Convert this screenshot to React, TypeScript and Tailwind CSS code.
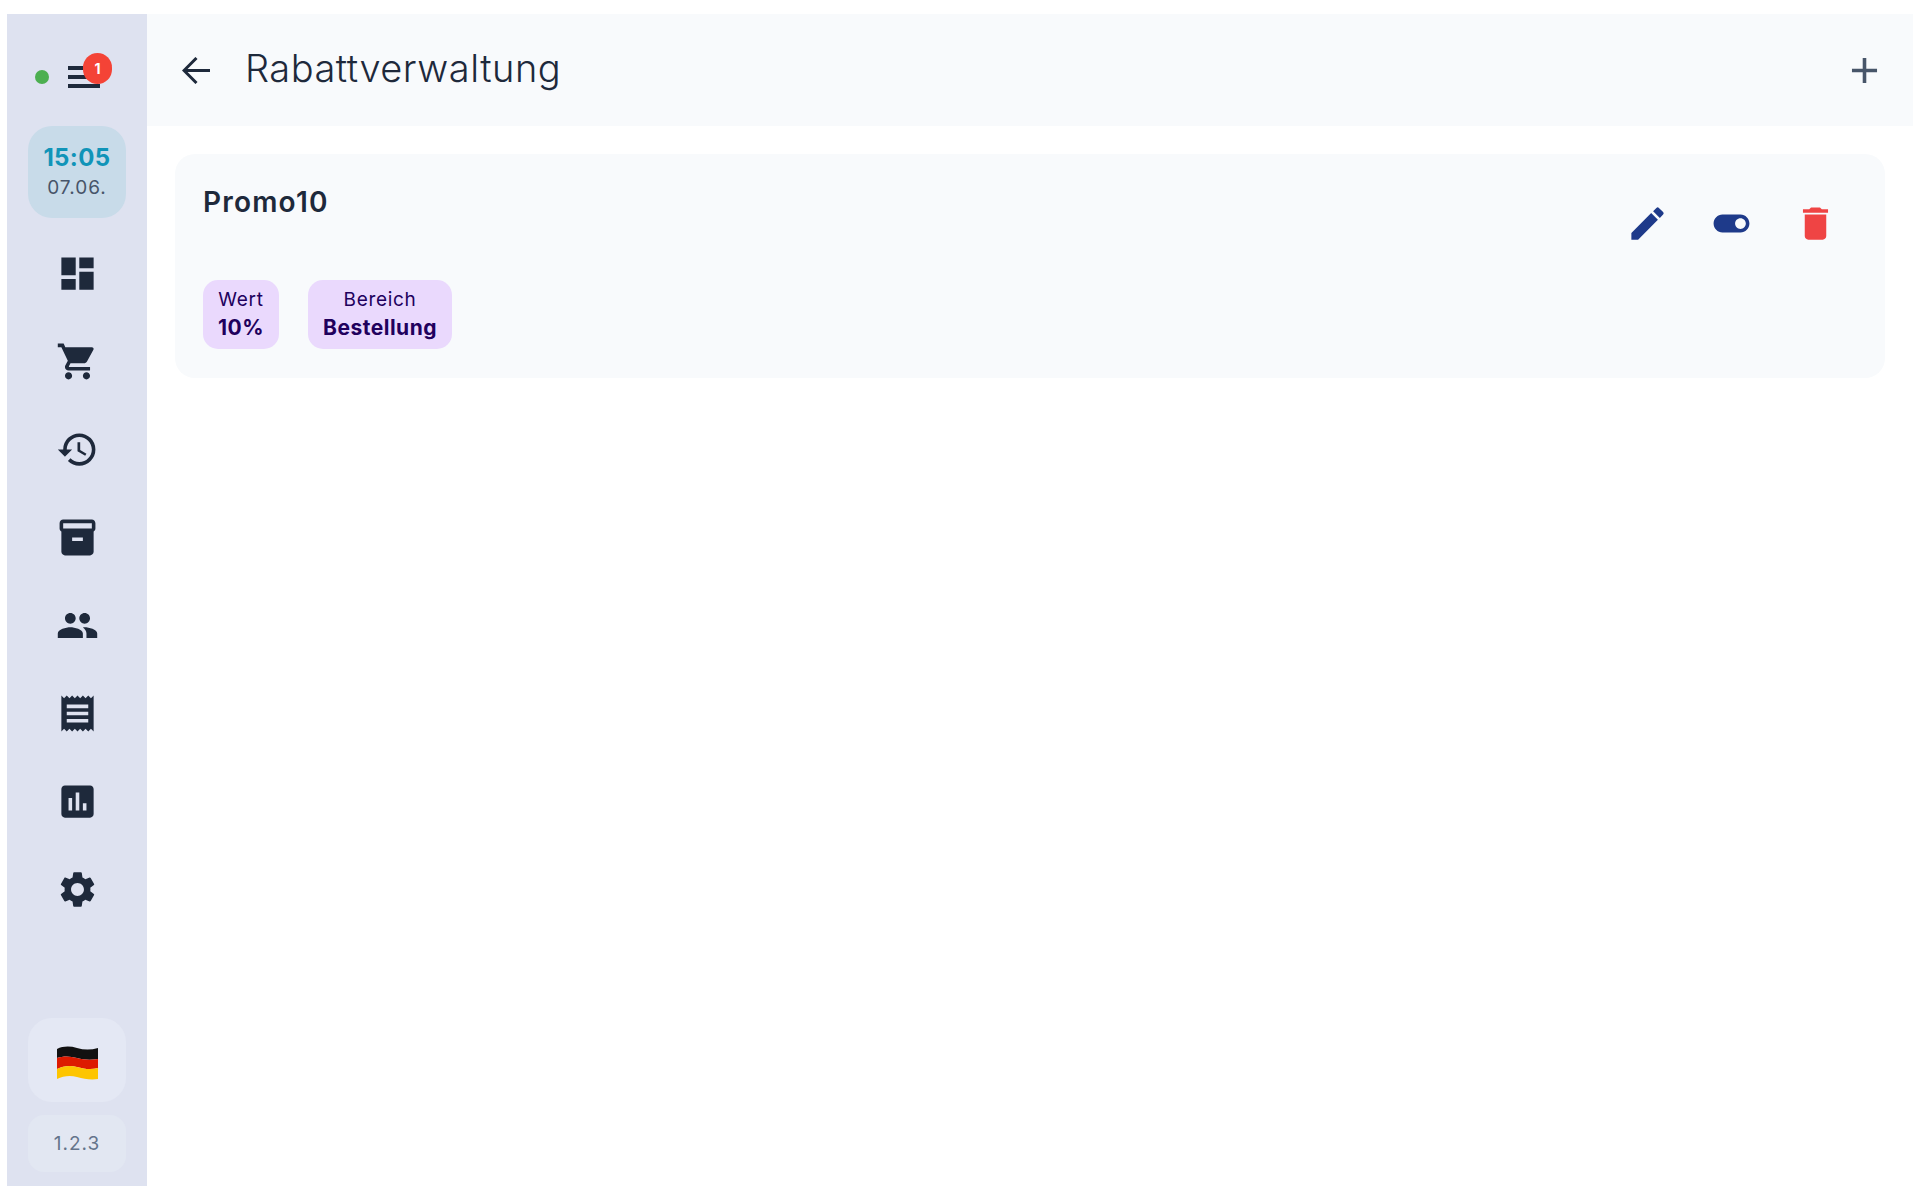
import {
  MdAdd,
  MdAssessment,
  MdDashboard,
  MdDelete,
  MdEdit,
  MdHistory,
  MdInventory2,
  MdPeople,
  MdReceipt,
  MdSettings,
  MdShoppingCart,
  MdToggleOn,
} from "react-icons/md";

const navItems = [
  MdDashboard,
  MdShoppingCart,
  MdHistory,
  MdInventory2,
  MdPeople,
  MdReceipt,
  MdAssessment,
  MdSettings,
];

const GermanFlag = () => (
  <svg viewBox="0 0 41 34" className="mt-[6px] h-[34px] w-[41px]">
    <path d="M0 3C6 0 13 0 20 2C27 4 34 4 41 2V13C34 14 27 14 20 12C13 10 6 10 0 12Z" fill="#111111" />
    <path d="M0 12C6 10 13 10 20 12C27 14 34 14 41 13V22C34 24 27 23 20 21C13 19 6 20 0 23Z" fill="#dd1a00" />
    <path d="M0 23C6 20 13 19 20 21C27 23 34 24 41 22V33C34 34 27 33 20 31C13 29 6 30 0 33Z" fill="#fdc500" />
  </svg>
);

const Chip = ({ label, value }: { label: string; value: string }) => (
  <div className="flex h-[69px] min-w-[76px] flex-col items-center rounded-[15px] bg-[#ead9fd] px-[15px] pt-[6px] text-[#21005d]">
    <span className="text-[19px] leading-[28px] tracking-[0.7px]">{label}</span>
    <span className="text-[21px] leading-[28px] font-bold tracking-[0.5px]">{value}</span>
  </div>
);

export default function App() {
  return (
    <div className="h-[1200px] bg-white pt-[14px] pr-[7px] pb-[14px] pl-[7px] font-['Inter',sans-serif] text-[#1e293b]">
      <div className="flex h-full">
        {/* Sidebar */}
        <aside className="flex w-[140px] shrink-0 flex-col items-center bg-[#dee2f0]">
          <div className="mt-[43px] flex h-[40px] items-center gap-[19px] pr-[19px]">
            <span className="h-[14px] w-[14px] rounded-full bg-[#4caf50]" />
            <div className="relative flex h-[22px] w-[32px] flex-col justify-between">
              <span className="h-[4px] bg-[#1e293b]" />
              <span className="h-[4px] bg-[#1e293b]" />
              <span className="h-[4px] bg-[#1e293b]" />
              <span className="absolute -top-[13px] left-[15px] flex h-[31px] w-[29px] items-center justify-center rounded-full bg-[#f44336] text-[14px] font-bold text-white">
                1
              </span>
            </div>
          </div>

          <div className="mt-[29px] flex h-[92px] w-[98px] flex-col items-center justify-center rounded-[24px] bg-[#c8dbe9] pt-[2px]">
            <span className="text-[24px] leading-[30px] font-bold tracking-[0.4px] text-[#1094b8]">15:05</span>
            <span className="text-[19px] leading-[30px] tracking-[1px] text-[#475569]">07.06.</span>
          </div>

          <nav className="mt-[11px] flex flex-col">
            {navItems.map((Icon, i) => (
              <div key={i} className="flex h-[88px] w-[98px] items-center justify-center">
                <Icon className="h-[43px] w-[43px] text-[#1e293b]" />
              </div>
            ))}
          </nav>

          <div className="mt-auto flex h-[84px] w-[98px] items-center justify-center rounded-[24px] bg-[#e4e8f4]">
            <GermanFlag />
          </div>
          <div className="mt-[13px] mb-[14px] flex h-[57px] w-[98px] items-center justify-center rounded-[16px] bg-[#e2e7f2] pt-[2px] text-[19px] tracking-[1px] text-[#64748b]">
            1.2.3
          </div>
        </aside>

        {/* Main */}
        <main className="flex min-w-0 flex-1 flex-col">
          <header className="flex h-[112px] items-center justify-between bg-[#f8fafc] pr-[27px] pl-[35px]">
            <div className="flex items-center gap-[35px]">
              <svg viewBox="0 0 28 27" className="h-[27px] w-[28px]" fill="none" stroke="#1e293b" strokeWidth="3">
                <path d="M28 13.5H2.5M14.5 1L2 13.5L14.5 26" />
              </svg>
              <h1 className="-mt-[5px] text-[38px] leading-none font-light tracking-[0.5px] text-[#1e293b]">
                Rabattverwaltung
              </h1>
            </div>
            <MdAdd className="h-[43px] w-[43px] text-[#475569]" />
          </header>

          <section className="p-[28px]">
            <div className="flex h-[224px] justify-between rounded-[20px] bg-[#f8fafc] pt-[28px] pr-[48px] pb-[29px] pl-[28px]">
              <div className="flex flex-col justify-between">
                <h2 className="mt-[2px] text-[28px] leading-[36px] font-semibold tracking-[1.2px]">Promo10</h2>
                <div className="flex gap-[29px]">
                  <Chip label="Wert" value="10%" />
                  <Chip label="Bereich" value="Bestellung" />
                </div>
              </div>
              <div className="flex items-start gap-[41px] pt-[20px]">
                <MdEdit className="h-[43px] w-[43px] text-[#1e3a8a]" />
                <MdToggleOn className="h-[43px] w-[43px] text-[#1e3a8a]" />
                <MdDelete className="h-[43px] w-[43px] text-[#ef4444]" />
              </div>
            </div>
          </section>
        </main>
      </div>
    </div>
  );
}
